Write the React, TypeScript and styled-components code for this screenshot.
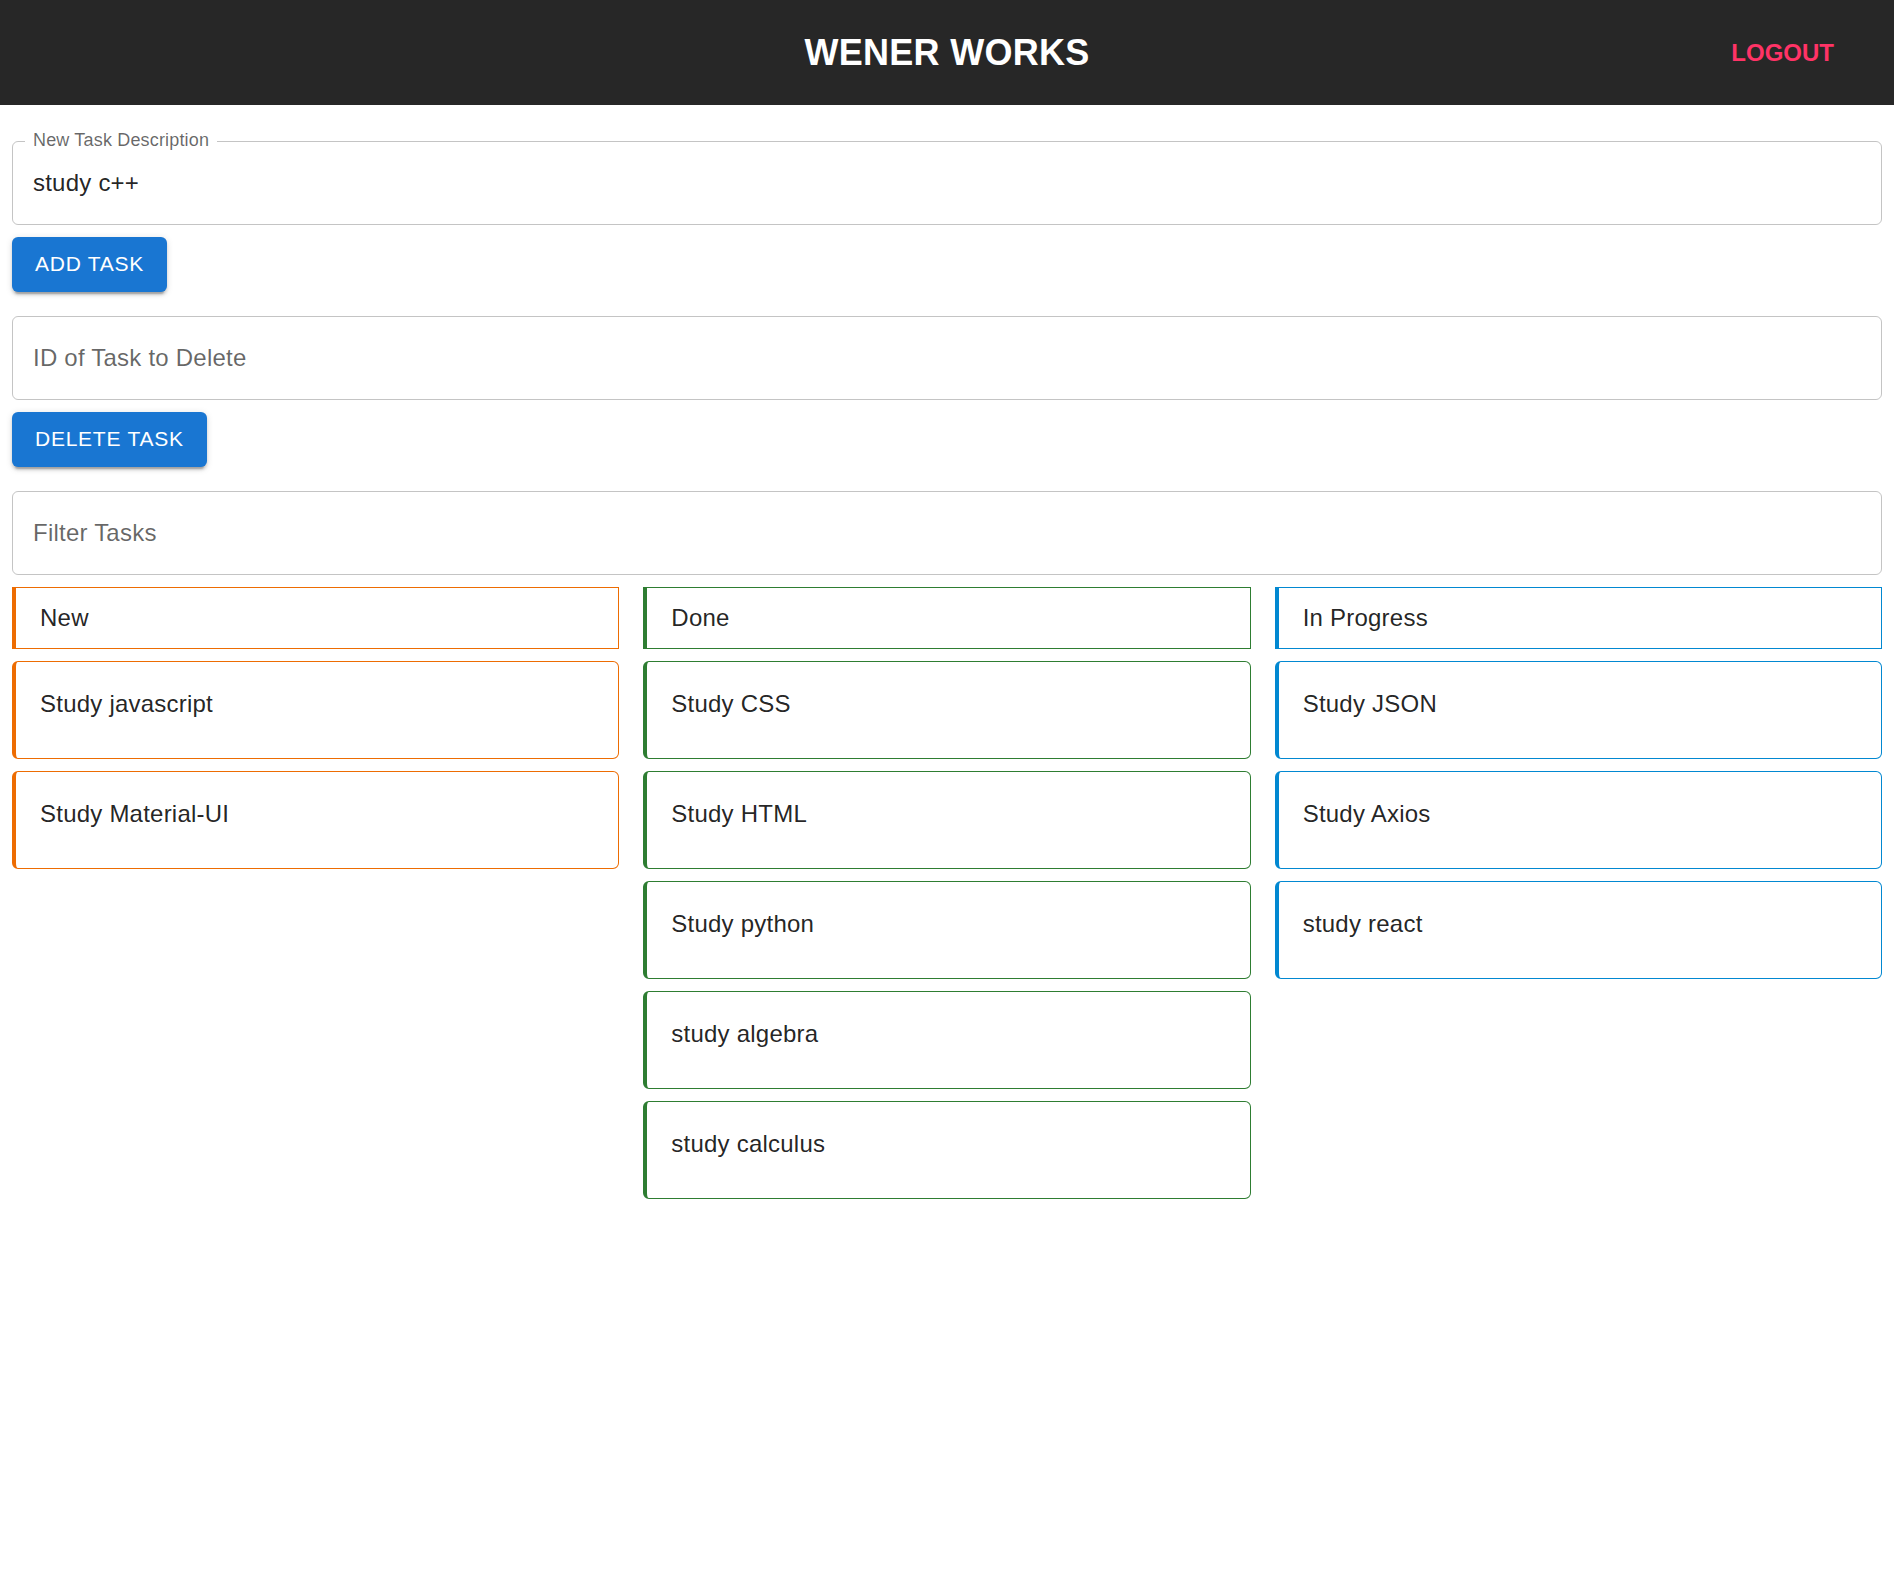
import React, { useState } from "react";
import styled, { createGlobalStyle } from "styled-components";

const GlobalStyle = createGlobalStyle`
  html, body {
    margin: 0;
    padding: 0;
    background: #ffffff;
  }
  body {
    font-family: "Liberation Sans", Arial, Helvetica, sans-serif;
    color: rgba(0, 0, 0, 0.87);
  }
  * {
    box-sizing: border-box;
  }
`;

const AppBar = styled.header`
  height: 105px;
  background: #272727;
  display: grid;
  grid-template-columns: 1fr auto 1fr;
  align-items: center;
  padding: 0 36px;
`;

const Title = styled.h1`
  grid-column: 2;
  margin: 0;
  padding-top: 2px;
  color: #ffffff;
  font-size: 36px;
  font-weight: 700;
  line-height: 1.334;
  letter-spacing: 0.0075em;
`;

const LogoutButton = styled.button`
  grid-column: 3;
  justify-self: end;
  background: none;
  border: none;
  padding: 9px 24px;
  color: #ff3366;
  font-family: inherit;
  font-size: 24px;
  font-weight: 700;
  line-height: 1.5;
  text-transform: uppercase;
  cursor: pointer;
`;

const Main = styled.main`
  padding: 12px;
`;

const Field = styled.div`
  position: relative;
  margin: 24px 0 12px;
`;

const FieldLabel = styled.span`
  position: absolute;
  left: 13px;
  top: -11px;
  padding: 0 8px;
  background: #ffffff;
  color: rgba(0, 0, 0, 0.6);
  font-size: 18px;
  line-height: 20px;
  letter-spacing: 0.00938em;
`;

const Input = styled.input`
  display: block;
  width: 100%;
  height: 84px;
  margin: 0;
  padding: 0 20px;
  border: 1px solid rgba(0, 0, 0, 0.23);
  border-radius: 6px;
  background: transparent;
  font-family: inherit;
  font-size: 24px;
  letter-spacing: 0.00938em;
  color: rgba(0, 0, 0, 0.87);
  outline: none;

  &::placeholder {
    color: rgba(0, 0, 0, 0.6);
    opacity: 1;
  }
`;

const ActionButton = styled.button`
  display: inline-block;
  margin: 0;
  padding: 9px 23px;
  border: none;
  border-radius: 6px;
  background: #1976d2;
  color: #ffffff;
  font-family: inherit;
  font-size: 21px;
  font-weight: 400;
  line-height: 1.75;
  letter-spacing: 0.75px;
  text-transform: uppercase;
  cursor: pointer;
  box-shadow: 0 4.5px 1.5px -3px rgba(0, 0, 0, 0.2), 0 3px 3px 0 rgba(0, 0, 0, 0.14),
    0 1.5px 7.5px 0 rgba(0, 0, 0, 0.12);
`;

const Board = styled.div`
  display: grid;
  grid-template-columns: repeat(3, 1fr);
  column-gap: 24px;
  align-items: start;
`;

const Column = styled.section`
  display: flex;
  flex-direction: column;
  gap: 12px;
`;

const ColumnHeader = styled.div<{ $color: string }>`
  border: 1px solid ${(p) => p.$color};
  border-left-width: 4px;
  padding: 12px 24px;
  font-size: 24px;
  line-height: 36px;
  letter-spacing: 0.00938em;
  color: rgba(0, 0, 0, 0.87);
`;

const TaskCard = styled.div<{ $color: string }>`
  border: 1px solid ${(p) => p.$color};
  border-left-width: 4px;
  border-radius: 6px;
  padding: 24px 24px 36px;
  font-size: 24px;
  line-height: 36px;
  letter-spacing: 0.00938em;
  color: rgba(0, 0, 0, 0.87);
  background: #ffffff;
`;

type ColumnData = { title: string; color: string; tasks: string[] };

const columns: ColumnData[] = [
  { title: "New", color: "#ed6c02", tasks: ["Study javascript", "Study Material-UI"] },
  {
    title: "Done",
    color: "#2e7d32",
    tasks: ["Study CSS", "Study HTML", "Study python", "study algebra", "study calculus"],
  },
  { title: "In Progress", color: "#0288d1", tasks: ["Study JSON", "Study Axios", "study react"] },
];

export default function App() {
  const [desc, setDesc] = useState("study c++");
  const [delId, setDelId] = useState("");
  const [filter, setFilter] = useState("");

  return (
    <>
      <GlobalStyle />
      <AppBar>
        <Title>WENER WORKS</Title>
        <LogoutButton>Logout</LogoutButton>
      </AppBar>
      <Main>
        <Field>
          <Input value={desc} onChange={(e) => setDesc(e.target.value)} />
          <FieldLabel>New Task Description</FieldLabel>
        </Field>
        <ActionButton>Add Task</ActionButton>
        <Field>
          <Input
            placeholder="ID of Task to Delete"
            value={delId}
            onChange={(e) => setDelId(e.target.value)}
          />
        </Field>
        <ActionButton>Delete Task</ActionButton>
        <Field>
          <Input
            placeholder="Filter Tasks"
            value={filter}
            onChange={(e) => setFilter(e.target.value)}
          />
        </Field>
        <Board>
          {columns.map((col) => (
            <Column key={col.title}>
              <ColumnHeader $color={col.color}>{col.title}</ColumnHeader>
              {col.tasks
                .filter((t) => t.toLowerCase().includes(filter.toLowerCase()))
                .map((t) => (
                  <TaskCard key={t} $color={col.color}>
                    {t}
                  </TaskCard>
                ))}
            </Column>
          ))}
        </Board>
      </Main>
    </>
  );
}
